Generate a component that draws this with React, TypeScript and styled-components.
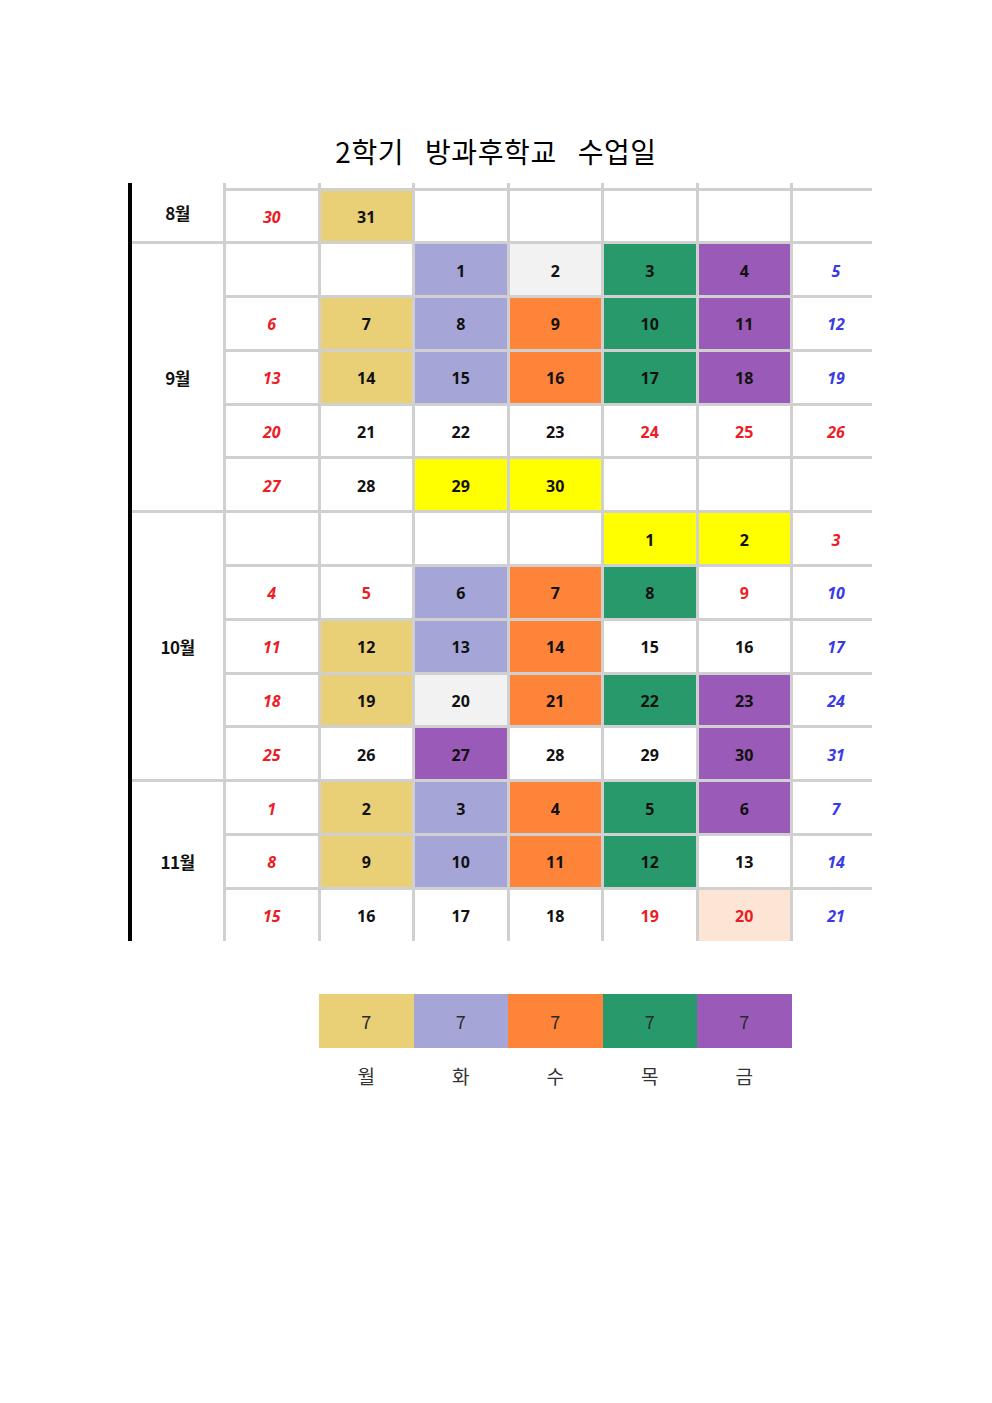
import React from 'react';
import styled, { createGlobalStyle } from 'styled-components';

const GlobalStyle = createGlobalStyle`
  html, body {
    margin: 0;
    padding: 0;
    background: #ffffff;
  }
  body {
    font-family: "Noto Sans CJK KR", "Noto Sans", sans-serif;
  }
`;

const COLORS = {
  mon: '#e9cf75',
  tue: '#a5a6d7',
  wed: '#fd8439',
  thu: '#28996b',
  fri: '#9a5ab7',
  gray: '#f2f2f2',
  yellow: '#ffff00',
  peach: '#fde5d6',
  white: '#ffffff',
};

type Fill = keyof typeof COLORS;
type Tone = 'normal' | 'sun' | 'sat' | 'holiday';

interface Day {
  n?: number;
  fill?: Fill;
  tone?: Tone;
}

interface Month {
  label: string;
  weeks: Day[][];
}

const e: Day = {};
const sun = (n: number): Day => ({ n, tone: 'sun' });
const sat = (n: number): Day => ({ n, tone: 'sat' });
const hol = (n: number, fill: Fill = 'white'): Day => ({ n, tone: 'holiday', fill });
const d = (n: number, fill: Fill = 'white'): Day => ({ n, fill });

const months: Month[] = [
  {
    label: '8월',
    weeks: [[sun(30), d(31, 'mon'), e, e, e, e, e]],
  },
  {
    label: '9월',
    weeks: [
      [e, e, d(1, 'tue'), d(2, 'gray'), d(3, 'thu'), d(4, 'fri'), sat(5)],
      [sun(6), d(7, 'mon'), d(8, 'tue'), d(9, 'wed'), d(10, 'thu'), d(11, 'fri'), sat(12)],
      [sun(13), d(14, 'mon'), d(15, 'tue'), d(16, 'wed'), d(17, 'thu'), d(18, 'fri'), sat(19)],
      [sun(20), d(21), d(22), d(23), hol(24), hol(25), sun(26)],
      [sun(27), d(28), d(29, 'yellow'), d(30, 'yellow'), e, e, e],
    ],
  },
  {
    label: '10월',
    weeks: [
      [e, e, e, e, d(1, 'yellow'), d(2, 'yellow'), sun(3)],
      [sun(4), hol(5), d(6, 'tue'), d(7, 'wed'), d(8, 'thu'), hol(9), sat(10)],
      [sun(11), d(12, 'mon'), d(13, 'tue'), d(14, 'wed'), d(15), d(16), sat(17)],
      [sun(18), d(19, 'mon'), d(20, 'gray'), d(21, 'wed'), d(22, 'thu'), d(23, 'fri'), sat(24)],
      [sun(25), d(26), d(27, 'fri'), d(28), d(29), d(30, 'fri'), sat(31)],
    ],
  },
  {
    label: '11월',
    weeks: [
      [sun(1), d(2, 'mon'), d(3, 'tue'), d(4, 'wed'), d(5, 'thu'), d(6, 'fri'), sat(7)],
      [sun(8), d(9, 'mon'), d(10, 'tue'), d(11, 'wed'), d(12, 'thu'), d(13), sat(14)],
      [sun(15), d(16), d(17), d(18), hol(19), hol(20, 'peach'), sat(21)],
    ],
  },
];

const legend: { fill: Fill; count: number; label: string }[] = [
  { fill: 'mon', count: 7, label: '월' },
  { fill: 'tue', count: 7, label: '화' },
  { fill: 'wed', count: 7, label: '수' },
  { fill: 'thu', count: 7, label: '목' },
  { fill: 'fri', count: 7, label: '금' },
];

const Page = styled.div`
  width: 992px;
  min-height: 1403px;
  padding-top: 132px;
  box-sizing: border-box;
`;

const Title = styled.h1`
  margin: 0 0 13px 0;
  text-align: center;
  font-family: "Noto Sans CJK KR", sans-serif;
  font-weight: 400;
  font-size: 28px;
  line-height: 38px;
  word-spacing: 14px;
  letter-spacing: 0.6px;
  color: #000;
`;

const Calendar = styled.div`
  display: flex;
  margin-left: 128px;
`;

const Rule = styled.div`
  width: 4px;
  background: #000;
`;

const Grid = styled.div<{ $rows: number }>`
  display: grid;
  grid-template-columns: 91px repeat(6, 91.5px) 79px;
  grid-template-rows: 4.5px repeat(${(p) => p.$rows}, 50.8px);
  gap: 3px;
  background: #d0d0d0;
`;

const Stub = styled.div`
  background: #fff;
`;

const MonthCell = styled.div<{ $start: number; $span: number }>`
  grid-column: 1;
  grid-row: ${(p) => p.$start} / span ${(p) => p.$span};
  background: #fff;
  display: flex;
  align-items: center;
  justify-content: center;
  font-family: "Noto Sans CJK KR", sans-serif;
  font-weight: 700;
  font-size: 17px;
  letter-spacing: -0.5px;
  color: #111;
`;

const toneColor: Record<Tone, string> = {
  normal: '#111111',
  sun: '#ee1c25',
  holiday: '#ee1c25',
  sat: '#3a3ae6',
};

const DayCell = styled.div<{ $fill: Fill; $tone: Tone; $edge: boolean }>`
  background: ${(p) => COLORS[p.$fill]};
  display: flex;
  align-items: center;
  justify-content: center;
  font-family: "Open Sans", "Noto Sans CJK KR", sans-serif;
  font-weight: 700;
  font-size: 16px;
  color: ${(p) => toneColor[p.$tone]};
  font-style: ${(p) => (p.$tone === 'sun' || p.$tone === 'sat' ? 'italic' : 'normal')};
  padding-top: 2px;
  padding-left: ${(p) => (p.$edge ? '7px' : '0')};
  box-sizing: border-box;
`;

const Legend = styled.div`
  margin: 53px 0 0 319px;
  display: grid;
  grid-template-columns: repeat(5, 94.5px);
  row-gap: 14px;
`;

const Swatch = styled.div<{ $fill: Fill }>`
  height: 54px;
  background: ${(p) => COLORS[p.$fill]};
  display: flex;
  align-items: center;
  justify-content: center;
  font-family: "Noto Sans CJK KR", sans-serif;
  font-size: 18px;
  color: #2a2a2a;
`;

const LegendLabel = styled.div`
  text-align: center;
  font-family: "Noto Sans CJK KR", sans-serif;
  font-size: 19px;
  line-height: 28px;
  color: #333;
`;

export default function App() {
  const totalRows = months.reduce((s, m) => s + m.weeks.length, 0);
  let row = 2;

  return (
    <Page>
      <GlobalStyle />
      <Title>2학기 방과후학교 수업일</Title>
      <Calendar>
        <Rule />
        <Grid $rows={totalRows}>
          {Array.from({ length: 7 }).map((_, i) => (
            <Stub key={`stub-${i}`} style={{ gridRow: 1, gridColumn: i + 2 }} />
          ))}
          {months.map((m, mi) => {
            const start = row;
            row += m.weeks.length;
            return (
              <React.Fragment key={m.label}>
                <MonthCell
                  $start={mi === 0 ? 1 : start}
                  $span={mi === 0 ? m.weeks.length + 1 : m.weeks.length}
                >
                  {m.label}
                </MonthCell>
                {m.weeks.map((w, wi) =>
                  w.map((day, di) => (
                    <DayCell
                      key={`${m.label}-${wi}-${di}`}
                      $fill={day.fill ?? 'white'}
                      $tone={day.tone ?? 'normal'}
                      $edge={di === 6}
                      style={{ gridRow: start + wi, gridColumn: di + 2 }}
                    >
                      {day.n}
                    </DayCell>
                  ))
                )}
              </React.Fragment>
            );
          })}
        </Grid>
      </Calendar>
      <Legend>
        {legend.map((l) => (
          <Swatch key={`s-${l.label}`} $fill={l.fill}>
            {l.count}
          </Swatch>
        ))}
        {legend.map((l) => (
          <LegendLabel key={`l-${l.label}`}>{l.label}</LegendLabel>
        ))}
      </Legend>
    </Page>
  );
}
